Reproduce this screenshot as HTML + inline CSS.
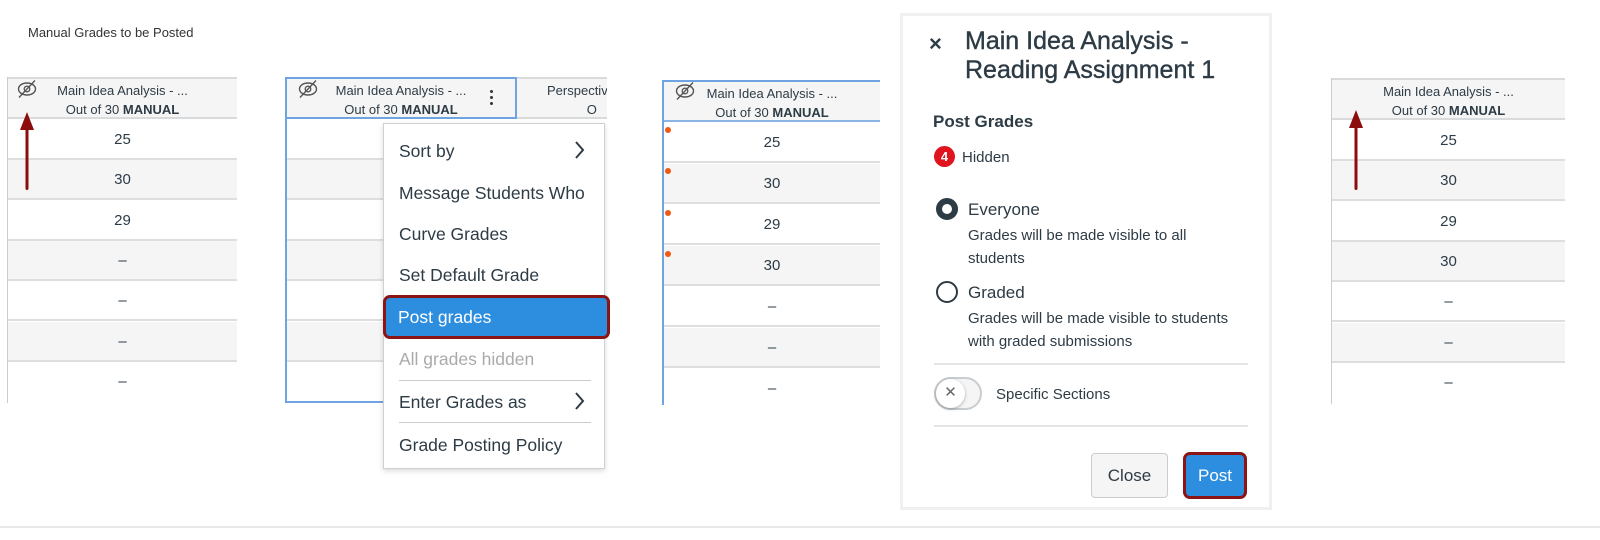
<!DOCTYPE html>
<html><head><style>
*{margin:0;padding:0;box-sizing:border-box}
body{width:1600px;height:540px;background:#fff;font-family:"Liberation Sans",sans-serif;color:#2d3b45;position:relative;overflow:hidden}
.abs{position:absolute}
.col{position:absolute;border-left:1px solid #ccc}
.hdr{position:absolute;left:0;right:0;height:42px;background:#f5f5f5;border-top:2px solid #d8dadc;border-bottom:2px solid #d8dadc;font-size:13px;text-align:center;line-height:19px;padding-top:2px}
.row{position:absolute;left:0;right:0;height:40px;border-bottom:2px solid #dcdee0;text-align:center;font-size:15px;line-height:40px;color:#2d3b45}
.g{background:#f5f5f5}
.mi{position:absolute;left:15px;font-size:17.5px;color:#2d3b45}
</style></head><body>
<div class="abs" style="left:28px;top:25px;font-size:13px;color:#333">Manual Grades to be Posted</div>

<!-- Panel 1 -->
<div class="col" style="left:7px;top:77px;width:230px;height:326px">
 <div class="hdr" style="top:0">Main Idea Analysis - ...<br>Out of 30 <b>MANUAL</b></div>
 <div class="row" style="top:43px">25</div><div class="row g" style="top:83px">30</div><div class="row" style="top:124px">29</div><div class="row g" style="top:164px">–</div><div class="row" style="top:204px">–</div><div class="row g" style="top:245px">–</div><div class="row" style="top:285px;border-bottom:none">–</div>
</div>
<svg class="abs" style="left:17px;top:80px" width="20" height="18" viewBox="0 0 20 18"><ellipse cx="10" cy="9" rx="8.5" ry="6" fill="none" stroke="#555" stroke-width="1.4"/><circle cx="10" cy="9" r="2.8" fill="none" stroke="#555" stroke-width="1.3"/><line x1="2" y1="17.5" x2="18" y2="0.5" stroke="#555" stroke-width="1.4"/></svg>
<svg class="abs" style="left:18px;top:110px" width="18" height="82"><polygon points="9,2 2,20 16,20" fill="#8b0d0d"/><rect x="7.5" y="18" width="3" height="62" rx="1.5" fill="#8b0d0d"/></svg>

<!-- Panel 2 -->
<div class="col" style="left:285px;top:77px;width:232px;height:326px;border-left:2px solid #6ea4e0;border-bottom:2px solid #6ea4e0">
 <div class="hdr" style="top:0;border:2px solid #6ea4e0;left:-2px;right:0">Main Idea Analysis - ...<br>Out of 30 <b>MANUAL</b></div>
 <div class="row" style="top:43px"></div><div class="row g" style="top:83px"></div><div class="row" style="top:124px"></div><div class="row g" style="top:164px"></div><div class="row" style="top:204px"></div><div class="row g" style="top:245px"></div>
</div>
<div class="abs" style="left:517px;top:77px;width:90px;height:42px;background:#f5f5f5;border-top:2px solid #d8dadc;border-bottom:2px solid #d8dadc;font-size:13px;line-height:19px;padding:2px 0 0 30px;overflow:hidden;white-space:nowrap">Perspective<br>&nbsp;&nbsp;&nbsp;&nbsp;&nbsp;&nbsp;&nbsp;&nbsp;&nbsp;&nbsp;&nbsp;O</div>
<svg class="abs" style="left:298px;top:80px" width="20" height="18" viewBox="0 0 20 18"><ellipse cx="10" cy="9" rx="8.5" ry="6" fill="none" stroke="#555" stroke-width="1.4"/><circle cx="10" cy="9" r="2.8" fill="none" stroke="#555" stroke-width="1.3"/><line x1="2" y1="17.5" x2="18" y2="0.5" stroke="#555" stroke-width="1.4"/></svg>
<div class="abs" style="left:490px;top:90px;width:4px"><div style="width:3px;height:3px;background:#333;border-radius:2px;margin-bottom:3px"></div><div style="width:3px;height:3px;background:#333;border-radius:2px;margin-bottom:3px"></div><div style="width:3px;height:3px;background:#333;border-radius:2px"></div></div>
<div class="abs" style="left:383px;top:123px;width:222px;height:346px;background:#fff;border:1px solid #d0d0d0;box-shadow:0 2px 5px rgba(0,0,0,.15)">
 <div class="mi" style="top:17px">Sort by</div>
 <div class="mi" style="top:59px">Message Students Who</div>
 <div class="mi" style="top:100px">Curve Grades</div>
 <div class="mi" style="top:141px">Set Default Grade</div>
 <div class="mi" style="top:225px;color:#aaa">All grades hidden</div>
 <div class="abs" style="left:15px;top:256px;width:192px;height:1px;background:#ccc"></div>
 <div class="mi" style="top:268px">Enter Grades as</div>
 <div class="abs" style="left:15px;top:298px;width:192px;height:1px;background:#ccc"></div>
 <div class="mi" style="top:311px">Grade Posting Policy</div>
</div>
<svg class="abs" style="left:572px;top:140px" width="14" height="20"><polyline points="4,2 11,10 4,18" fill="none" stroke="#2d3b45" stroke-width="2"/></svg>
<svg class="abs" style="left:572px;top:391px" width="14" height="20"><polyline points="4,2 11,10 4,18" fill="none" stroke="#2d3b45" stroke-width="2"/></svg>
<div class="abs" style="left:383px;top:295px;width:227px;height:44px;background:#2d8ee0;border:3px solid #8b1414;border-radius:7px;color:#fff;font-size:17.5px;padding:9px 0 0 12px">Post grades</div>

<!-- Panel 3 -->
<div class="col" style="left:662px;top:80px;width:218px;height:325px;border-left:2px solid #6ea4e0">
 <div class="hdr" style="top:0;border-top:2px solid #6ea4e0;border-bottom:2px solid #8bb4e6">Main Idea Analysis - ...<br>Out of 30 <b>MANUAL</b></div>
 <div class="row" style="top:43px">25</div><div class="row g" style="top:84px">30</div><div class="row" style="top:125px">29</div><div class="row g" style="top:166px">30</div><div class="row" style="top:207px">–</div><div class="row g" style="top:248px">–</div><div class="row" style="top:289px;border-bottom:none">–</div>
</div>
<svg class="abs" style="left:675px;top:82px" width="20" height="18" viewBox="0 0 20 18"><ellipse cx="10" cy="9" rx="8.5" ry="6" fill="none" stroke="#555" stroke-width="1.4"/><circle cx="10" cy="9" r="2.8" fill="none" stroke="#555" stroke-width="1.3"/><line x1="2" y1="17.5" x2="18" y2="0.5" stroke="#555" stroke-width="1.4"/></svg>
<div class="abs" style="left:665px;top:127px;width:6px;height:6px;border-radius:3px;background:#f05a14"></div>
<div class="abs" style="left:665px;top:168px;width:6px;height:6px;border-radius:3px;background:#f05a14"></div>
<div class="abs" style="left:665px;top:210px;width:6px;height:6px;border-radius:3px;background:#f05a14"></div>
<div class="abs" style="left:665px;top:251px;width:6px;height:6px;border-radius:3px;background:#f05a14"></div>

<!-- Modal -->
<div class="abs" style="left:900px;top:13px;width:372px;height:497px;border:3px solid #f0f0f0;background:#fff">
 <div class="abs" style="left:26px;top:15px;font-size:22px;font-weight:bold">×</div>
 <div class="abs" style="left:62px;top:11px;font-size:25px;line-height:29px;color:#2d3b45;-webkit-text-stroke:0.4px #2d3b45">Main Idea Analysis -<br>Reading Assignment 1</div>
 <div class="abs" style="left:30px;top:96px;font-size:17px;font-weight:bold">Post Grades</div>
 <div class="abs" style="left:31px;top:130px;width:21px;height:21px;border-radius:11px;background:#e0141e;color:#fff;font-size:13px;font-weight:bold;text-align:center;line-height:21px">4</div>
 <div class="abs" style="left:59px;top:133px;font-size:15px">Hidden</div>
 <div class="abs" style="left:33px;top:182px;width:22px;height:22px;border-radius:11px;border:6px solid #2d3b45"></div>
 <div class="abs" style="left:65px;top:184px;font-size:17px">Everyone</div>
 <div class="abs" style="left:65px;top:208px;font-size:15px;line-height:23px">Grades will be made visible to all<br>students</div>
 <div class="abs" style="left:33px;top:265px;width:22px;height:22px;border-radius:11px;border:2px solid #2d3b45"></div>
 <div class="abs" style="left:65px;top:267px;font-size:17px">Graded</div>
 <div class="abs" style="left:65px;top:291px;font-size:15px;line-height:23px">Grades will be made visible to students<br>with graded submissions</div>
 <div class="abs" style="left:31px;top:347px;width:314px;height:2px;background:#e3e5e7"></div>
 <div class="abs" style="left:31px;top:361px;width:48px;height:33px;border-radius:17px;background:#f5f5f5;border:2px solid #c7cdd1"></div>
 <div class="abs" style="left:33px;top:363px;width:29px;height:29px;border-radius:15px;background:#fff;box-shadow:0 1px 3px rgba(0,0,0,.3);text-align:center;line-height:28px;color:#666;font-size:15px">✕</div>
 <div class="abs" style="left:93px;top:370px;font-size:15px">Specific Sections</div>
 <div class="abs" style="left:31px;top:409px;width:314px;height:2px;background:#e3e5e7"></div>
 <div class="abs" style="left:188px;top:437px;width:77px;height:45px;background:#f5f5f5;border:1px solid #c7cdd1;border-radius:4px;font-size:17px;text-align:center;line-height:43px">Close</div>
 <div class="abs" style="left:280px;top:436px;width:64px;height:47px;background:#2d8ee0;border:3px solid #8b1414;border-radius:7px;color:#fff;font-size:17px;text-align:center;line-height:41px">Post</div>
</div>

<!-- Panel 4 -->
<div class="col" style="left:1331px;top:78px;width:234px;height:326px">
 <div class="hdr" style="top:0">Main Idea Analysis - ...<br>Out of 30 <b>MANUAL</b></div>
 <div class="row" style="top:43px">25</div><div class="row g" style="top:83px">30</div><div class="row" style="top:124px">29</div><div class="row g" style="top:164px">30</div><div class="row" style="top:204px">–</div><div class="row g" style="top:245px">–</div><div class="row" style="top:285px;border-bottom:none">–</div>
</div>
<svg class="abs" style="left:1347px;top:108px" width="18" height="84"><polygon points="9,2 2,20 16,20" fill="#8b0d0d"/><rect x="7.5" y="18" width="3" height="64" rx="1.5" fill="#8b0d0d"/></svg>

<div class="abs" style="left:0;top:526px;width:1600px;height:2px;background:#e8e8e8"></div>
</body></html>
